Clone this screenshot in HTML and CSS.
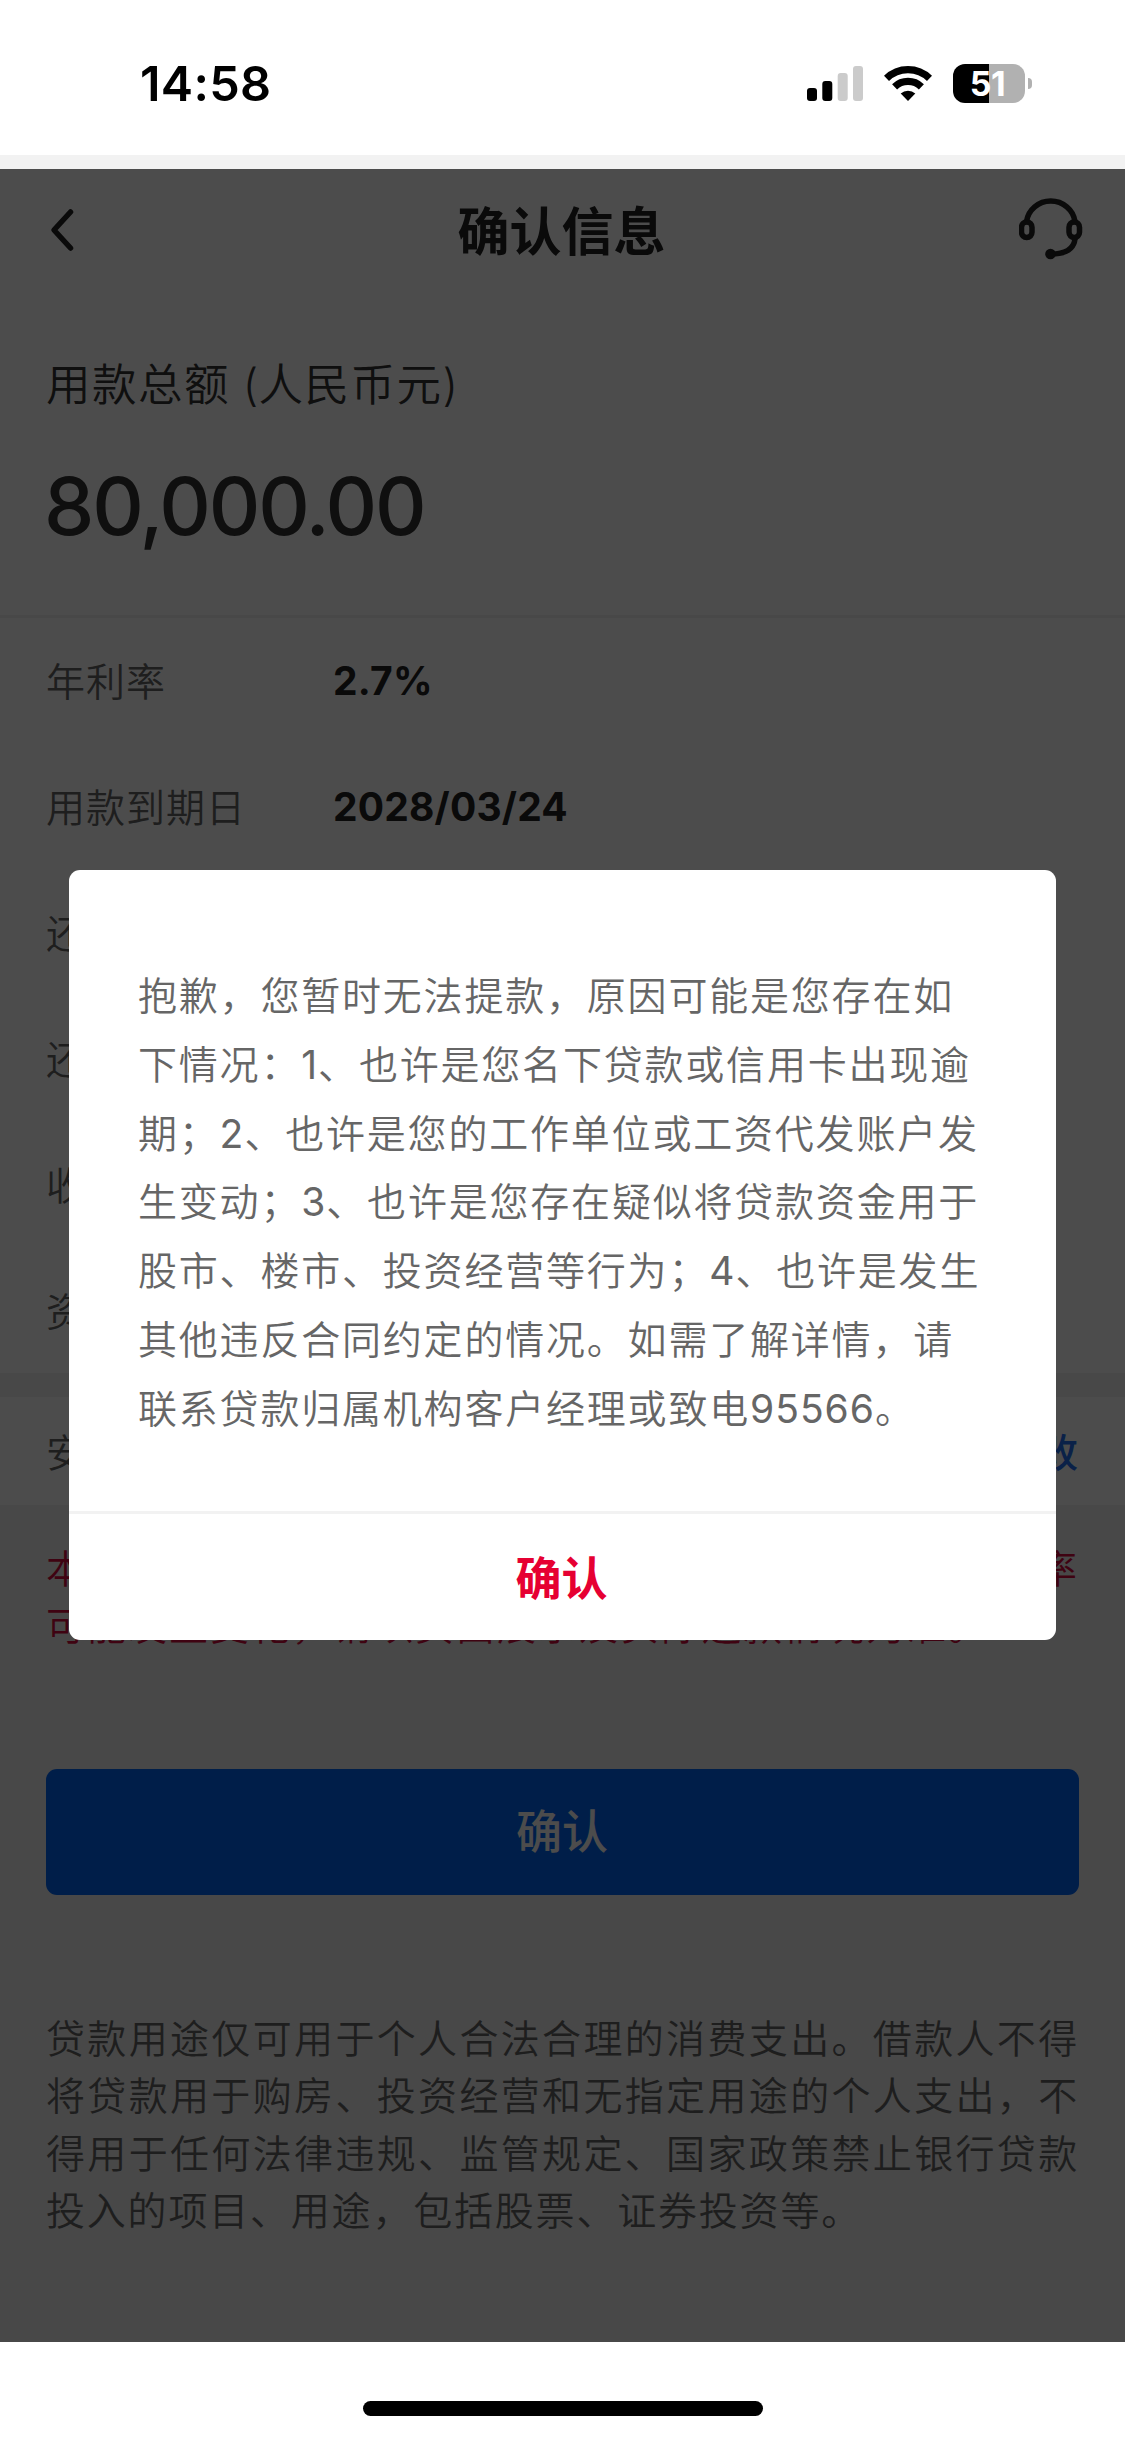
FILE: index.html
```html
<!DOCTYPE html>
<html lang="zh-CN">
<head>
<meta charset="utf-8">
<title>确认信息</title>
<link rel="stylesheet" href="styles.css">
</head>
<body>
<div class="phone">
  <header class="status">
    <span class="time">14:58</span>
    <div class="indicators">
      <svg class="signal" width="56" height="35" viewBox="0 0 56 35">
        <rect x="0" y="22" width="10" height="13" rx="3"/>
        <rect x="15.3" y="15" width="10" height="20" rx="3"/>
        <rect class="off" x="30.7" y="7" width="10" height="28" rx="3"/>
        <rect class="off" x="46" y="0" width="10" height="35" rx="3"/>
      </svg>
      <svg class="wifi" width="48" height="35" viewBox="0 0 48 35">
        <path class="arc" d="M2.5 12.4A30.7 30.7 0 0 1 45.5 12.4"/>
        <path class="arc" d="M10.6 20.8A19.2 19.2 0 0 1 37.4 20.8"/>
        <path d="M16.7 27.6A10.7 10.7 0 0 1 31.3 27.6L24 35Z"/>
      </svg>
      <div class="battery"><span class="level">51</span></div>
      <i class="nub"></i>
    </div>
  </header>
  <div class="strip"></div>
  <main class="page">
    <nav class="nav">
      <svg width="28" height="46" viewBox="0 0 28 46"><path class="line" d="M22.5 5L6 23L22.5 41"/></svg>
      <h1 class="title">确认信息</h1>
      <svg class="headset" width="64" height="64" viewBox="0 0 64 64">
        <path class="line" d="M7.5 23.5A24.5 23.8 0 0 1 56 23.5M56 41C55 49 49 56 32 56"/>
        <rect class="line" x="2.5" y="24" width="10.5" height="15.5" rx="5.2"/>
        <rect class="line" x="50" y="24" width="10.5" height="15.5" rx="5.2"/>
        <circle cx="31.5" cy="56" r="5.3"/>
      </svg>
    </nav>
    <section class="total">
      <p class="caption">用款总额<span class="paren">&nbsp;(</span>人民币元<span class="paren">)</span></p>
      <p class="amount">80,000.00</p>
    </section>
    <dl class="details">
      <div class="row"><dt>年利率</dt><dd>2.7%</dd></div>
      <div class="row"><dt>用款到期日</dt><dd>2028/03/24</dd></div>
      <div class="row"><dt>还</dt></div>
      <div class="row"><dt>还</dt></div>
      <div class="row"><dt>收</dt></div>
      <div class="row"><dt>资</dt></div>
    </dl>
    <div class="security"><span>安</span><a class="change">改</a></div>
    <div class="warning">
      <div class="spread"><span>本</span><span>率</span></div>
      <div>可能发生变化，请以页面展示及实际还款情况为准。</div>
    </div>
    <button class="submit">确认</button>
    <p class="notice">贷款用途仅可用于个人合法合理的消费支出。借款人不得将贷款用于购房、投资经营和无指定用途的个人支出，不得用于任何法律违规、监管规定、国家政策禁止银行贷款投入的项目、用途，包括股票、证券投资等。</p>
    <div class="mask"></div>
    <div class="dialog" role="dialog">
      <p class="message">抱歉，您暂时无法提款，原因可能是您存在如<br>下情况：<b>1</b>、也许是您名下贷款或信用卡出现逾<br>期；<b>2</b>、也许是您的工作单位或工资代发账户发<br>生变动；<b>3</b>、也许是您存在疑似将贷款资金用于<br>股市、楼市、投资经营等行为；<b>4</b>、也许是发生<br>其他违反合同约定的情况。如需了解详情，请<br>联系贷款归属机构客户经理或致电<b>95566</b>。</p>
      <button class="ok">确认</button>
    </div>
  </main>
  <footer class="home"><i class="home-bar"></i></footer>
</div>
</body>
</html>
```
FILE: styles.css
```css
* { box-sizing: border-box; margin: 0; padding: 0; }
body {
  width: 1125px;
  background: #fff;
  font-family: Inter, "Noto Sans CJK SC", sans-serif;
}
.phone { display: flex; flex-direction: column; height: 2439px; overflow: hidden; }

.status { height: 155px; display: flex; justify-content: space-between; align-items: flex-start; padding: 64px 93px 0 140px; }
.time { font-size: 48.5px; line-height: 40px; font-weight: 600; letter-spacing: .3px; }
.indicators { display: flex; align-items: center; height: 39px; }
.signal { margin-right: 21px; }
.signal .off { fill: #cbcbcb; }
.wifi { margin-right: 21px; }
.arc { fill: none; stroke: #000; stroke-width: 7.2; }
.battery {
  width: 72px; height: 39px; border-radius: 12px;
  background: linear-gradient(90deg, #000 50.5%, #b1b1b1 50.5%);
  color: #fff; text-align: center;
}
.level { display: block; padding-right: 3px; font-size: 34px; line-height: 40px; font-weight: 700; letter-spacing: -.5px; }
.nub { width: 4px; height: 11px; margin-left: 3px; border-radius: 0 4px 4px 0; background: #b1b1b1; }

.strip { height: 14px; background: #f2f2f2; }
.page { position: relative; height: 2173px; background: #f1f1f1; }
.nav {
  height: 122px; display: flex; justify-content: space-between; align-items: center;
  padding: 0 42px 0 48px; background: #fff;
}
.line { fill: none; stroke: #222; stroke-width: 5.5; stroke-linecap: round; stroke-linejoin: round; }
.headset circle { fill: #222; }
.title { font-size: 52px; font-weight: 700; color: #222; line-height: 60px; padding: 5px 0 0 28px; }

.total { height: 327px; padding: 61px 46px 0; background: #fff; border-bottom: 3px solid #f0f0f0; }
.caption { font-size: 44.5px; line-height: 66px; letter-spacing: 1.5px; color: #333; font-weight: 350; }
.paren { letter-spacing: .2px; }
.amount { margin: 40px 0 0 -2px; font-size: 80px; line-height: 96px; font-weight: 500; letter-spacing: -2.2px; color: #333; }

.details { height: 755px; background: #fff; }
.row { display: flex; align-items: center; height: 126px; padding: 0 46px 1px; }
.row dt { width: 287px; font-size: 39px; letter-spacing: 1px; color: #666; font-weight: 350; padding-bottom: 4px; }
.row dd { font-size: 39px; font-weight: 700; letter-spacing: .2px; color: #222; }

.security {
  margin-top: 24px; height: 108px; padding: 0 47px 3px 46px; display: flex; justify-content: space-between; align-items: center;
  background: #fff; font-size: 39px; font-weight: 350; color: #666;
}
.change { color: #2470f0; font-weight: 500; }
.warning { padding: 35px 46px 0; font-size: 39px; font-weight: 350; line-height: 57px; letter-spacing: 2px; color: #d20a3c; height: 264px; }
.spread { display: flex; justify-content: space-between; }
.submit {
  display: block; width: 1033px; height: 126px; margin: 0 46px; padding: 0 1px 8px 0; border: 0; border-radius: 11px;
  background: #0064f5; color: #fff; font: 500 46px "Noto Sans CJK SC", sans-serif;
}
.notice {
  margin: 115px 46px 0 46px; font-size: 39px; font-weight: 350; line-height: 57.3px; letter-spacing: 1.8px;
  text-align: justify; color: #666;
}
.mask { position: absolute; inset: 0; background: rgba(0, 0, 0, .7); }

.dialog {
  position: absolute; left: 69px; top: 701px; width: 987px; height: 770px;
  display: flex; flex-direction: column; border-radius: 11px; background: #fff;
}
.message {
  height: 644px; padding: 92px 0 0 69px; border-bottom: 3px solid #f2f2f2;
  font-size: 39px; font-weight: 350; line-height: 68.8px; letter-spacing: 1.8px; white-space: nowrap; color: #666;
}
.message b { font-weight: 400; letter-spacing: 1px; }
.ok { flex: 1; padding: 0 2px 4px 0; border: 0; background: none; color: #e60032; font: 700 46px "Noto Sans CJK SC", sans-serif; }

.home { height: 97px; display: flex; justify-content: center; padding-top: 59px; }
.home-bar { width: 400px; height: 15px; border-radius: 8px; background: #000; }
```
